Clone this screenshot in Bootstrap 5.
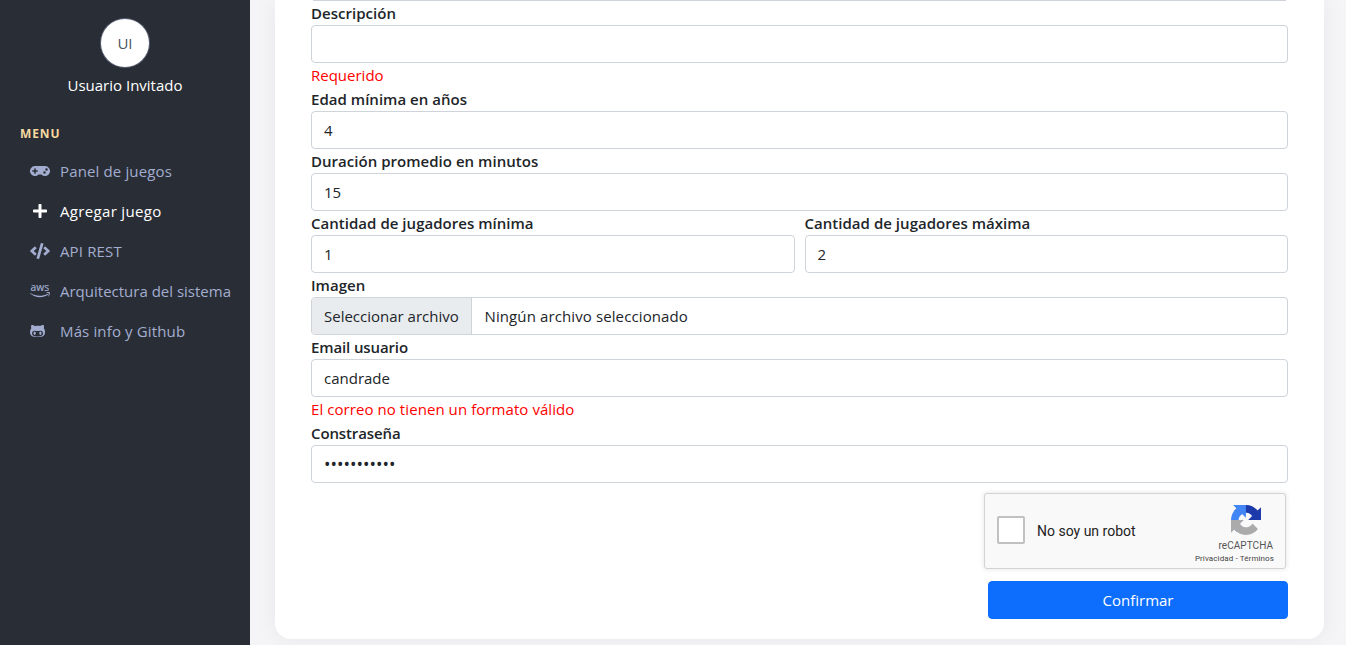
<!DOCTYPE html>
<html lang="es">
<head>
<meta charset="utf-8">
<meta name="viewport" content="width=device-width, initial-scale=1">
<title>Agregar juego</title>
<link href="https://cdn.jsdelivr.net/npm/bootstrap@5.3.0/dist/css/bootstrap.min.css" rel="stylesheet">
<style>
body{font-family:"Open Sans","Noto Sans",sans-serif;font-size:15px;line-height:24px;background:#f5f5f7;color:#212529}
.sidebar{width:250px;background:#292d36;color:#fff}
.profile{padding-top:19px;gap:6px}
.avatar{width:48px;height:48px;color:#4b5262;box-shadow:0 0 0 1px #5a6072}
.menu-title{font-size:12px;font-weight:700;color:#f5d9a0;margin:25px 0 5px 20px;letter-spacing:.9px}
.side-link{height:40px;padding-left:30px;color:#a3add0;text-decoration:none;white-space:nowrap;letter-spacing:.14px}
.side-link:hover{color:#fff}
.side-link.active{color:#fff;letter-spacing:.33px}
.side-link.tight{letter-spacing:0}
.side-icon{width:20px;margin-right:10px}
.side-icon svg{fill:currentColor;height:16px;display:block;overflow:visible}
.side-icon text{font:400 11px "Open Sans",sans-serif}
.panel{margin:0 22px 6px 25px;padding:0 36px 20px;border-radius:0 0 16px 16px;background:#fff;box-shadow:0 0 24px rgba(40,40,90,.06)}
.edge{height:1px;margin:0 2px;background:#ced4da}
.field-label{display:block;font-weight:600;height:24px;white-space:nowrap;letter-spacing:.03px}
.field-label.tight{letter-spacing:-.12px}
.form-control{height:38px;font-size:15px;line-height:24px;border-color:#ced4da;border-radius:4px;color:#212529}
.players{display:grid;grid-template-columns:1fr 1fr;gap:10px}
.error{color:#f00;height:24px}
.error.long{letter-spacing:.07px}
.file-btn{background:#e9ecef;width:160px;padding-left:12px;border-right:1px solid #ced4da}
.file-name{padding-left:12.5px;letter-spacing:.11px}
.secret{font-size:17.3px}
.captcha{width:302px;height:76px;margin:10px 2px 12px 0;background:#f9f9f9;border:1px solid #d3d3d3;border-radius:3px;box-shadow:0 0 4px 1px rgba(0,0,0,.08);font-family:Roboto,sans-serif;padding:0 11px 0 12px;color:#222}
.tick{width:28px;height:28px;border:2px solid #c1c1c1;border-radius:2px;background:#fff;margin:-3px 12px 0 0}
.robot{font-size:14px}
.brand-box{padding-top:11px;color:#555}
.brand-box svg{width:30px;height:30px;margin-right:13px}
.brand-name{font-size:10px;line-height:12px;margin:5px 1px 0 0;letter-spacing:.05px}
.legal{font-size:8px;line-height:12px;letter-spacing:.11px;margin-top:1px;color:#444}
.send{width:300px;height:38px;font-size:15px;line-height:24px;border-radius:4px;background:#0d6efd}
</style>
</head>
<body class="overflow-hidden">
<div class="d-flex vh-100">
<aside class="sidebar flex-shrink-0">
  <div class="profile d-flex flex-column align-items-center">
    <div class="avatar rounded-circle bg-white d-flex align-items-center justify-content-center">UI</div>
    <div>Usuario Invitado</div>
  </div>
  <div class="menu-title">MENU</div>
  <nav>
    <a class="side-link d-flex align-items-center" href="#"><span class="side-icon"><svg viewBox="0 0 640 512"><path d="M480.07 96H160a160 160 0 1 0 114.24 272h91.52A160 160 0 1 0 480.07 96zM248 268a12 12 0 0 1-12 12h-52v52a12 12 0 0 1-12 12h-24a12 12 0 0 1-12-12v-52H84a12 12 0 0 1-12-12v-24a12 12 0 0 1 12-12h52v-52a12 12 0 0 1 12-12h24a12 12 0 0 1 12 12v52h52a12 12 0 0 1 12 12zm216 76a40 40 0 1 1 40-40 40 40 0 0 1-40 40zm64-96a40 40 0 1 1 40-40 40 40 0 0 1-40 40z"/></svg></span>Panel de juegos</a>
    <a class="side-link active d-flex align-items-center" href="#"><span class="side-icon d-flex justify-content-center"><svg viewBox="0 0 448 512"><path d="M416 208H272V64c0-17.67-14.33-32-32-32h-32c-17.67 0-32 14.33-32 32v144H32c-17.67 0-32 14.33-32 32v32c0 17.67 14.33 32 32 32h144v144c0 17.67 14.33 32 32 32h32c17.67 0 32-14.33 32-32V304h144c17.67 0 32-14.33 32-32v-32c0-17.67-14.33-32-32-32z"/></svg></span>Agregar juego</a>
    <a class="side-link d-flex align-items-center" href="#"><span class="side-icon"><svg viewBox="0 0 640 512"><path d="M278.9 511.5l-61-17.7c-6.4-1.8-10-8.5-8.2-14.9L346.2 8.7c1.8-6.4 8.5-10 14.9-8.2l61 17.7c6.4 1.8 10 8.5 8.2 14.9L293.8 503.3c-1.9 6.4-8.5 10.1-14.9 8.2zm-114-112.2l43.5-46.4c4.6-4.9 4.3-12.7-.8-17.2L117 256l90.6-79.7c5.1-4.5 5.5-12.3.8-17.2l-43.5-46.4c-4.5-4.8-12.1-5.1-17-.5L3.8 247.2c-5.1 4.7-5.1 12.8 0 17.5l144.1 135.1c4.9 4.6 12.5 4.4 17-.5zm327.2.6l144.1-135.1c5.1-4.7 5.1-12.8 0-17.5L492.1 112.1c-4.8-4.5-12.4-4.3-17 .5L431.6 159c-4.6 4.9-4.3 12.7.8 17.2L523 256l-90.6 79.7c-5.1 4.5-5.5 12.3-.8 17.2l43.5 46.4c4.5 4.9 12.1 5.1 17 .6z"/></svg></span>API REST</a>
    <a class="side-link tight d-flex align-items-center" href="#"><span class="side-icon"><svg viewBox="0 0 20 16"><text x=".5" y="7.8" stroke="currentColor" stroke-width=".2" textLength="18.6" lengthAdjust="spacingAndGlyphs">aws</text><path d="M.2 10.1C5.5 13.500 12 13.700 17.700 11.100c.5-.2.8.3.4.6C13 15.300 5 15 .1 10.500c-.3-.3-.1-.6.1-.4zM16.200 9.800c1-.8 3.200-.9 3.600-.4.3.5-.2 3-1.300 4-.2.2-.4.1-.3-.2.4-1 .8-2.300.6-2.800-.3-.4-1.600-.3-2.400-.2-.3 0-.4-.2-.2-.4z"/></svg></span>Arquitectura del sistema</a>
    <a class="side-link d-flex align-items-center" href="#"><span class="side-icon"><svg viewBox="0 0 480 512"><path d="M186.1 328.7c0 20.9-10.9 55.1-36.7 55.1s-36.7-34.2-36.7-55.1 10.9-55.1 36.7-55.1 36.7 34.2 36.7 55.1zM480 278.2c0 31.9-3.2 65.7-17.5 95-37.9 76.6-142.1 74.8-216.7 74.8-75.8 0-186.2 2.7-225.6-74.8-14.6-29-20.2-63.1-20.2-95 0-41.9 13.9-81.5 41.5-113.6-5.2-15.8-7.7-32.4-7.7-48.8 0-21.5 4.9-32.3 14.6-51.8 45.3 0 74.3 9 108.8 36 29-6.9 58.8-10 88.7-10 27 0 54.2 2.9 80.4 9.2 34-26.7 63-35.2 107.8-35.2 9.8 19.5 14.6 30.3 14.6 51.8 0 16.4-2.6 32.7-7.7 48.2 27.5 32.4 39 72.3 39 114.2zm-64.3 50.5c0-43.9-26.7-82.6-73.5-82.6-18.9 0-37 3.4-56 6-14.9 2.3-29.8 3.2-45.1 3.2-15.2 0-30.1-.9-45.1-3.2-18.7-2.6-37-6-56-6-46.8 0-73.5 38.7-73.5 82.6 0 87.8 80.4 101.3 150.4 101.3h48.2c70.3 0 150.6-13.4 150.6-101.3zm-82.6-55.1c-25.8 0-36.7 34.2-36.7 55.1s10.9 55.1 36.7 55.1 36.7-34.2 36.7-55.1-10.9-55.1-36.7-55.1z"/></svg></span>Más info y Github</a>
  </nav>
</aside>
<main class="flex-grow-1">
  <form class="panel">
    <div class="edge"></div>
    <label class="field-label" for="desc">Descripción</label>
    <input class="form-control" id="desc" type="text">
    <div class="error">Requerido</div>
    <label class="field-label" for="age">Edad mínima en años</label>
    <input class="form-control" id="age" type="text" value="4">
    <label class="field-label" for="time">Duración promedio en minutos</label>
    <input class="form-control" id="time" type="text" value="15">
    <div class="players">
      <div><label class="field-label" for="min">Cantidad de jugadores mínima</label><input class="form-control" id="min" type="text" value="1"></div>
      <div><label class="field-label" for="max">Cantidad de jugadores máxima</label><input class="form-control" id="max" type="text" value="2"></div>
    </div>
    <span class="field-label">Imagen</span>
    <div class="form-control d-flex p-0 overflow-hidden">
      <div class="file-btn d-flex align-items-center">Seleccionar archivo</div>
      <div class="file-name d-flex align-items-center">Ningún archivo seleccionado</div>
    </div>
    <label class="field-label tight" for="mail">Email usuario</label>
    <input class="form-control" id="mail" type="text" value="candrade">
    <div class="error long">El correo no tienen un formato válido</div>
    <label class="field-label tight" for="pass">Constraseña</label>
    <input class="form-control secret" id="pass" type="password" value="abcdefghijk">
    <div class="d-flex flex-column align-items-end">
      <div class="captcha d-flex">
        <div class="d-flex align-items-center flex-grow-1"><div class="tick"></div><span class="robot">No soy un robot</span></div>
        <div class="brand-box d-flex flex-column align-items-end">
          <svg viewBox="0 0 64 64"><path fill="#1c3aa9" d="M64 31.955l-.033-1.37V4.687l-7.16 7.16C50.948 4.674 42.033.093 32.05.093c-10.4 0-19.622 4.96-25.458 12.64l11.736 11.86a15.55 15.55 0 0 1 4.754-5.334c2.05-1.6 4.952-2.906 8.968-2.906.485 0 .86.057 1.135.163 4.976.393 9.288 3.14 11.828 7.124l-8.307 8.307z"/><path fill="#4285f4" d="M31.862.094l-1.37.033H4.594l7.16 7.16C4.58 13.147 0 22.06 0 32.046c0 10.4 4.96 19.622 12.64 25.458L24.5 45.768a15.55 15.55 0 0 1-5.334-4.754c-1.6-2.05-2.906-4.952-2.906-8.968 0-.485.057-.86.163-1.135.393-4.976 3.14-9.288 7.124-11.828l8.307 8.307z"/><path fill="#ababab" d="M.001 32.045l.033 1.37v25.898l7.16-7.16c5.86 7.173 14.774 11.754 24.76 11.754 10.4 0 19.622-4.96 25.458-12.64L45.676 39.407a15.55 15.55 0 0 1-4.754 5.334c-2.05 1.6-4.952 2.906-8.968 2.906-.485 0-.86-.057-1.135-.163-4.976-.393-9.288-3.14-11.828-7.124l8.307-8.307z"/></svg>
          <div class="brand-name">reCAPTCHA</div>
          <div class="legal">Privacidad - Términos</div>
        </div>
      </div>
      <button class="btn btn-primary send" type="button">Confirmar</button>
    </div>
  </form>
</main>
</div>
</body>
</html>
